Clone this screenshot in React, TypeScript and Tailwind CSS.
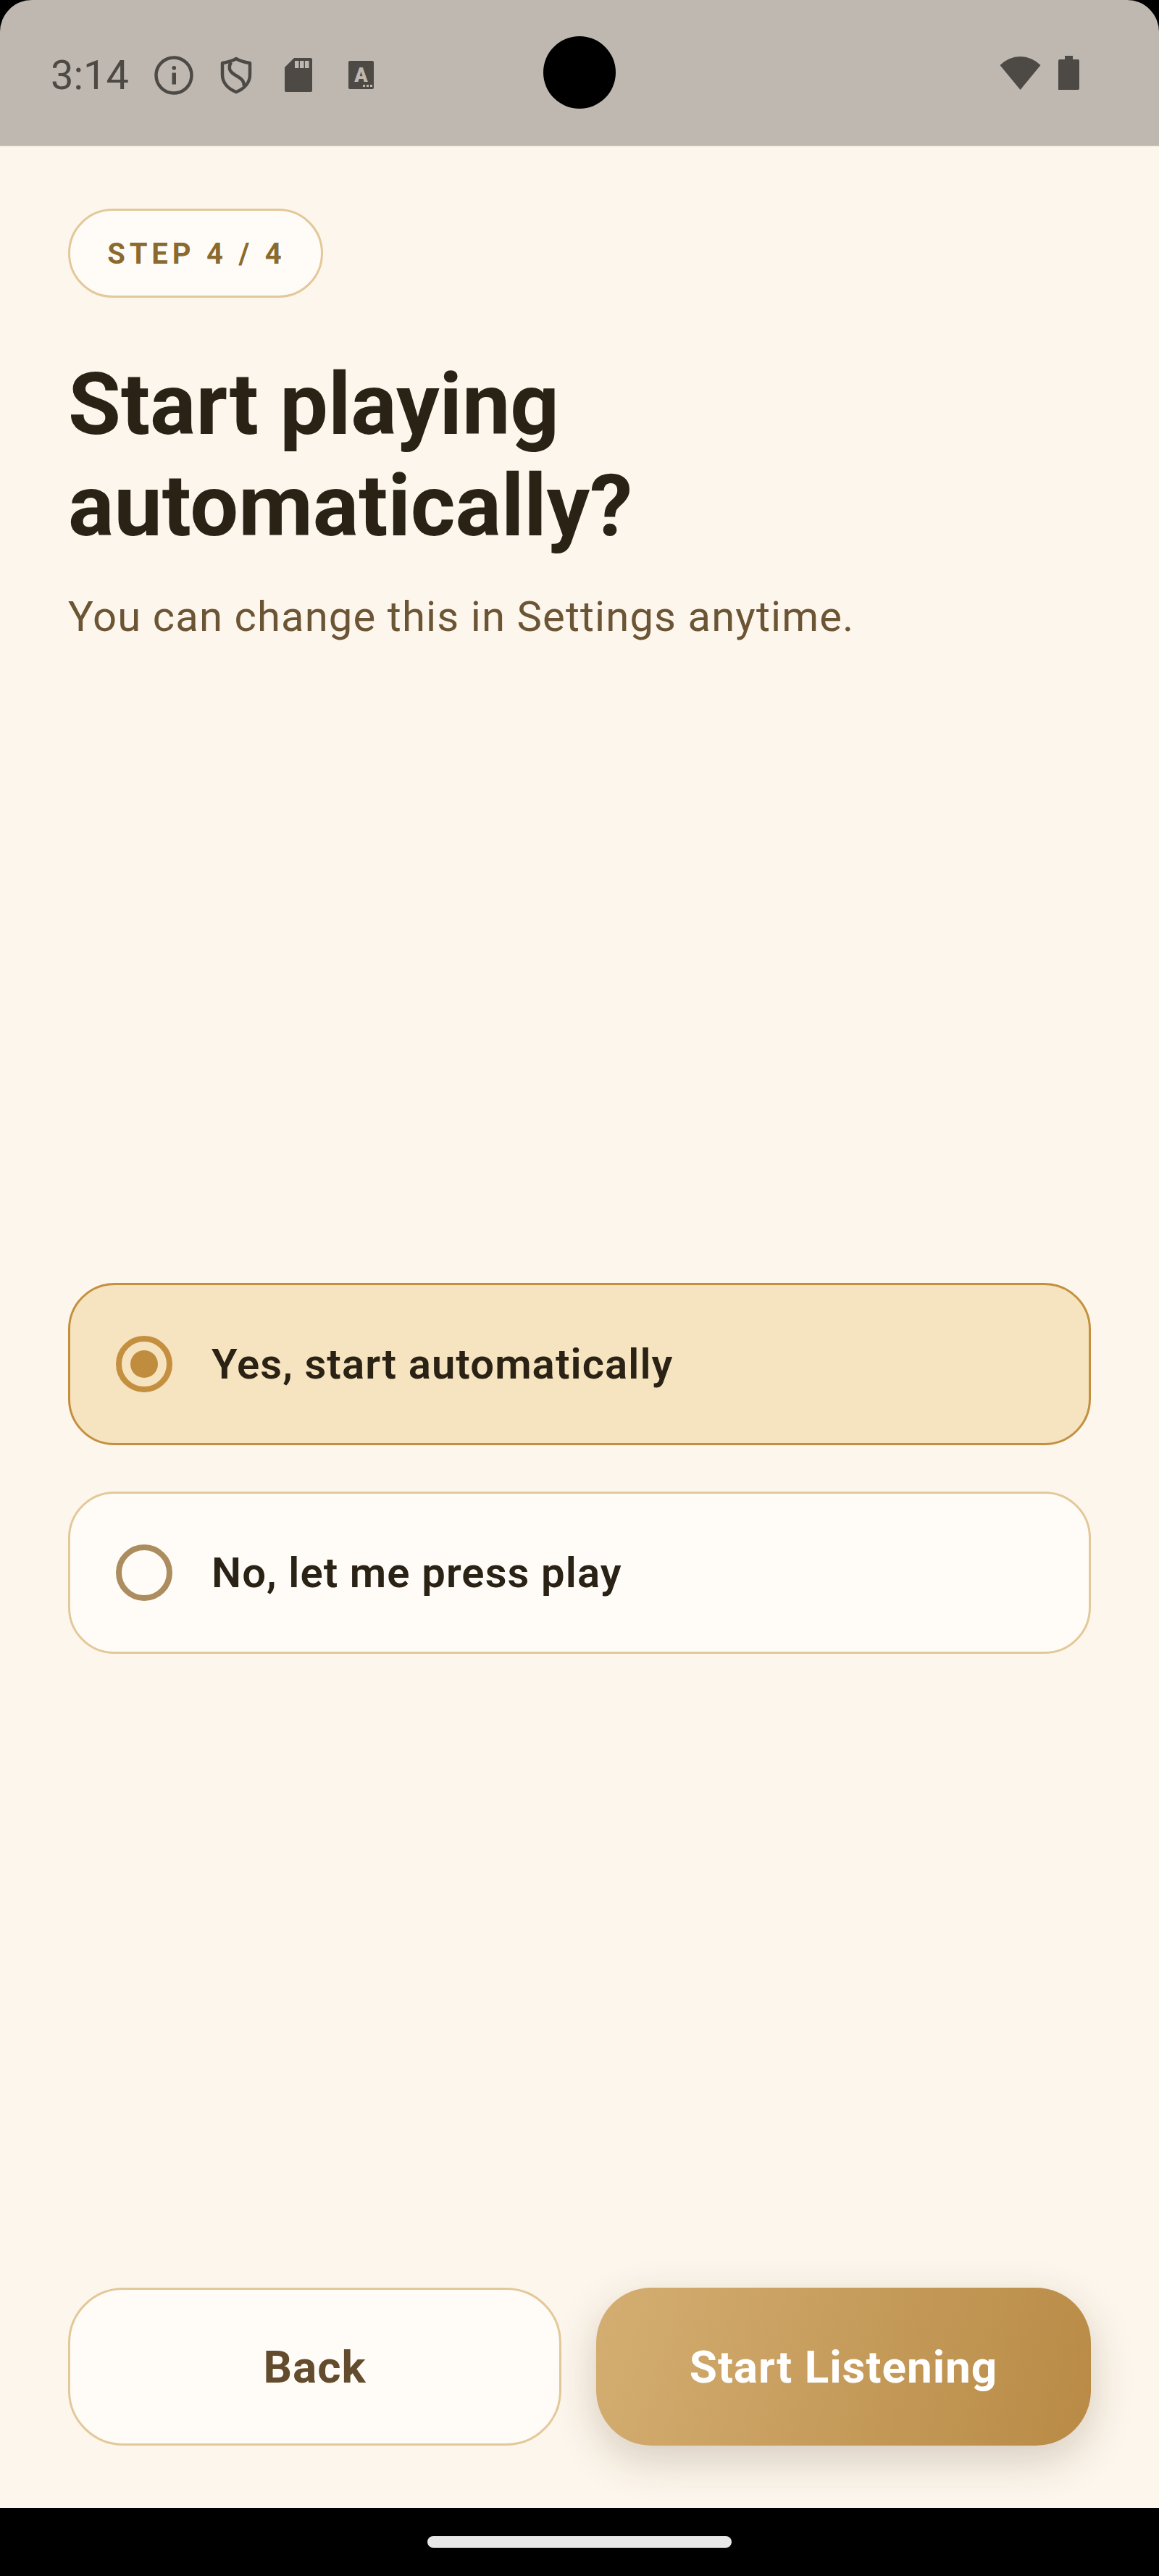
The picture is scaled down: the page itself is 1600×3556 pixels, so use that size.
const font = "font-['Roboto',sans-serif]";

const StatusIcons = () => (
  <>
    <svg width="60" height="60" viewBox="0 0 60 60" fill="none">
      <circle cx="30" cy="30" r="24.5" stroke="#4d4a45" strokeWidth="4.5" />
      <rect x="27.5" y="17" width="5.5" height="5.5" rx="2.5" fill="#4d4a45" />
      <rect x="27.5" y="26.5" width="5.5" height="16" fill="#4d4a45" />
    </svg>
    <svg width="60" height="60" viewBox="0 0 60 60" fill="none" stroke="#4d4a45" strokeWidth="4.5">
      <path d="M30 7 C35 10 42 12 49 13 V29 C49 41 40 49 30 53 C20 49 11 41 11 29 V13 C18 12 25 10 30 7 Z" strokeLinejoin="round" />
      <path d="M23 12 C17 22 24 27 31 31 C38 35 41 38 41 45" />
    </svg>
    <svg width="60" height="60" viewBox="0 0 60 60">
      <path d="M24 6 H47 a2 2 0 0 1 2 2 V51 a2 2 0 0 1 -2 2 H13 a2 2 0 0 1 -2 -2 V19 Z" fill="#4d4a45" />
      <rect x="25" y="10" width="5.5" height="10" fill="#bfb8b1" />
      <rect x="32" y="10" width="5.5" height="10" fill="#bfb8b1" />
      <rect x="39" y="10" width="5.5" height="10" fill="#bfb8b1" />
    </svg>
    <svg width="60" height="60" viewBox="0 0 60 60">
      <rect x="13" y="10" width="35" height="39" rx="2" fill="#4d4a45" />
      <text x="30.5" y="39" textAnchor="middle" fontFamily="Roboto" fontWeight="900" fontSize="27" fill="#bfb8b1">A</text>
      <rect x="33" y="43" width="3" height="3" fill="#bfb8b1" />
      <rect x="38" y="43" width="3" height="3" fill="#bfb8b1" />
      <rect x="43" y="43" width="3" height="3" fill="#bfb8b1" />
    </svg>
  </>
);

const StatusBar = () => (
  <div className="relative flex h-[202px] shrink-0 items-center justify-between rounded-t-[44px] border-b border-[#d5cfc6] bg-[#bfb8b1] pl-[70px] pr-[95px] pt-[7px]">
    <div className="flex items-center">
      <span className="mr-[35px] w-[105px] text-[56px] font-normal leading-none text-[#4d4a45]">3:14</span>
      <div className="flex items-center gap-[26px]">
        <StatusIcons />
      </div>
    </div>
    <div className="absolute left-[750px] top-[50px] h-[100px] w-[100px] rounded-full bg-black"></div>
    <div className="flex items-center gap-[7px]">
      <svg width="60" height="60" viewBox="0 0 60 60">
        <path d="M2.5 16 A38.7 38.7 0 0 1 58.5 16 L30.5 50 Z" fill="#4d4a45" />
      </svg>
      <svg width="60" height="60" viewBox="0 0 60 60">
        <path d="M25 3 H36 V8 H43 a2 2 0 0 1 2 2 V48 a2 2 0 0 1 -2 2 H16 V10 a2 2 0 0 1 2 -2 H25 Z" fill="#4d4a45" />
      </svg>
    </div>
  </div>
);

const Option = ({ label, selected }: { label: string; selected?: boolean }) => (
  <div className={`flex h-[224px] items-center gap-[54px] rounded-[64px] border-[3px] pl-[63px] ${selected ? "border-[#c4903f] bg-[#f6e3bf]" : "border-[#e3c899] bg-[#fffcf8]"}`}>
    <div className={`flex h-[78px] w-[78px] items-center justify-center rounded-full border-[8px] ${selected ? "border-[#c4903f]" : "border-[#ab8d5f]"}`}>
      {selected && <div className="h-[38px] w-[38px] rounded-full bg-[#c08d3e]"></div>}
    </div>
    <span className="text-[58px] font-semibold leading-none tracking-[1.1px] text-[#2b2216]">{label}</span>
  </div>
);

export default function App() {
  return (
    <div className={`flex h-[3556px] w-[1600px] flex-col bg-black ${font}`}>
      <StatusBar />
      <main className="flex flex-1 flex-col bg-[#fdf6ec] px-[94px] pb-[86px] pt-[86px]">
        <div className="flex h-[123px] w-[352px] items-center justify-center rounded-full border-[3px] border-[#e3c899] bg-[#fffcf8] pl-[3px] pt-[2px] text-[40px] font-bold tracking-[5.8px] text-[#8b6a2f]">
          STEP 4 / 4
        </div>
        <h1 className="mt-[78px] w-[900px] text-[118.5px] font-bold leading-[140px] text-[#2b2216]">Start playing automatically?</h1>
        <p className="mt-[42px] text-[58px] leading-[80px] tracking-[1.1px] text-[#6b5535]">You can change this in Settings anytime.</p>
        <div className="flex flex-1 flex-col justify-center gap-[64px] pt-[4px]">
          <Option label="Yes, start automatically" selected />
          <Option label="No, let me press play" />
        </div>
        <div className="flex gap-[48px]">
          <button className="flex h-[218px] w-[681px] items-center justify-center rounded-[76px] border-[3px] border-[#e3c899] bg-[#fffcf8] text-[62px] font-bold tracking-[1px] text-[#634c2d]">Back</button>
          <button className="flex h-[218px] flex-1 items-center justify-center rounded-[76px] bg-[linear-gradient(108deg,#d4ae72,#b88a45)] text-[62px] font-bold tracking-[1px] text-white shadow-[0_20px_60px_rgba(60,40,10,0.2)]">Start Listening</button>
        </div>
      </main>
      <div className="flex h-[94px] shrink-0 justify-center bg-black pt-[39px]">
        <div className="h-[16px] w-[420px] rounded-full bg-[#e8e8e8]"></div>
      </div>
    </div>
  );
}
